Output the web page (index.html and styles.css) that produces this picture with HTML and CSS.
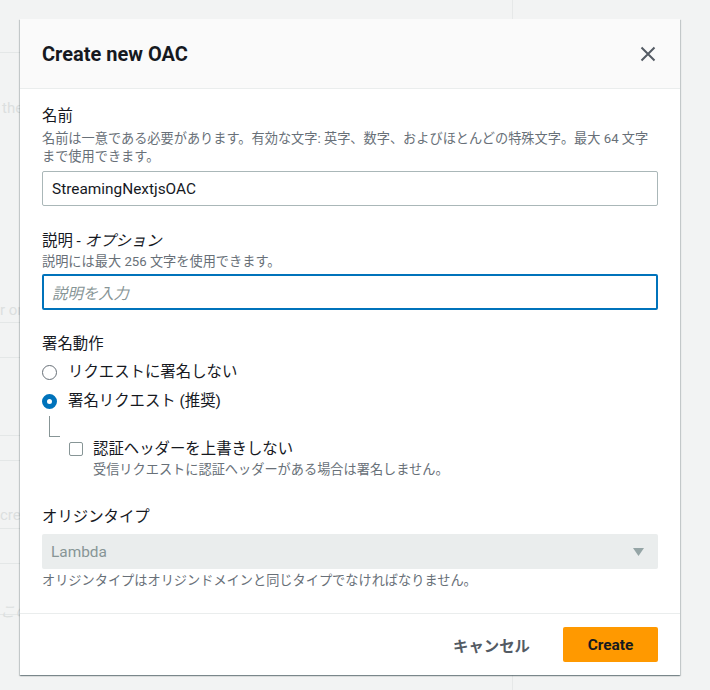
FILE: index.html
```html
<!DOCTYPE html>
<html lang="ja">
<head>
<meta charset="utf-8">
<title>Create new OAC</title>
<link rel="stylesheet" href="styles.css">
</head>
<body>
<div class="page">
  <div class="bg-panel">
    <div class="bg-row r1"></div>
    <div class="bg-row r2">
      <div class="bg-text t1">the</div>
      <div class="bg-text t2">r on</div>
    </div>
    <div class="bg-row r3"></div>
    <div class="bg-row r4"></div>
    <div class="bg-row r5"></div>
    <div class="bg-row r6"><div class="bg-text t3">crea</div></div>
    <div class="bg-row r7"></div>
    <div class="bg-row r8"><div class="bg-text t4">この</div></div>
  </div>
</div>

<div class="modal" role="dialog">
  <div class="modal-header">
    <h2 class="modal-title">Create new OAC</h2>
    <button class="close-btn" aria-label="close">
      <svg width="16" height="16" viewBox="0 0 16 16"><path d="M1.5 1.5 L14.5 14.5 M14.5 1.5 L1.5 14.5" stroke="#545b64" stroke-width="2" fill="none"/></svg>
    </button>
  </div>

  <div class="modal-body">
    <div class="field">
      <div class="label">名前</div>
      <div class="desc">名前は一意である必要があります。有効な文字: 英字、数字、およびほとんどの特殊文字。最大 64 文字まで使用できます。</div>
      <div class="input">StreamingNextjsOAC</div>
    </div>

    <div class="field f2">
      <div class="label">説明 - <i>オプション</i></div>
      <div class="desc">説明には最大 256 文字を使用できます。</div>
      <div class="input focused"><span class="placeholder">説明を入力</span></div>
    </div>

    <div class="field f3">
      <div class="label">署名動作</div>
      <div class="radio-row first"><span class="radio"></span><span>リクエストに署名しない</span></div>
      <div class="radio-row"><span class="radio checked"></span><span>署名リクエスト (推奨)</span></div>
      <div class="connector"></div>
      <div class="nested">
        <div class="check-row"><span class="checkbox"></span><span>認証ヘッダーを上書きしない</span></div>
        <div class="desc nested-desc">受信リクエストに認証ヘッダーがある場合は署名しません。</div>
      </div>
    </div>

    <div class="field f4">
      <div class="label">オリジンタイプ</div>
      <div class="select">
        <span>Lambda</span>
        <svg width="11" height="8" viewBox="0 0 11 8"><path d="M0 0 H11 L5.5 8 Z" fill="#95a5a6"/></svg>
      </div>
      <div class="desc select-desc">オリジンタイプはオリジンドメインと同じタイプでなければなりません。</div>
    </div>
  </div>

  <div class="modal-footer">
    <button class="btn-link">キャンセル</button>
    <button class="btn-primary">Create</button>
  </div>
</div>
</body>
</html>
```

FILE: styles.css
```css
* { box-sizing: border-box; }

html, body {
  margin: 0;
  padding: 0;
}

body {
  width: 710px;
  height: 690px;
  overflow: hidden;
  background: #f2f3f3;
  font-family: Roboto, "Noto Sans CJK JP", sans-serif;
  color: #16191f;
  position: relative;
}

/* background page (behind the dialog) */
.page {
  display: flex;
  height: 690px;
}

.bg-panel {
  width: 513px;
  height: 690px;
  border-right: 1px solid #e6e8e8;
}

.bg-row {
  border-bottom: 1px solid #e4e7e7;
}

.r1 { height: 53px; }
.r2 { height: 270px; }
.r3 { height: 35px; }
.r4 { height: 78px; }
.r5 { height: 25px; }
.r6 { height: 68px; }
.r7 { height: 35px; }
.r8 { height: 51px; }

.bg-text {
  font-size: 15px;
  line-height: 20px;
  color: #dcdfdf;
  white-space: nowrap;
}

.t1 { padding-top: 45px; padding-left: 2px; }
.t2 { margin-top: 182px; }
.t3 { padding-top: 44px; }
.t4 { padding-top: 38px; font-style: italic; }

/* dialog */
.modal {
  position: absolute;
  left: 20px;
  top: 19px;
  width: 660px;
  background: #ffffff;
  box-shadow: 0 1px 1px 0 rgba(0, 28, 36, 0.3), 1px 1px 1px 0 rgba(0, 28, 36, 0.15), -1px 1px 1px 0 rgba(0, 28, 36, 0.15);
}

.modal-header {
  height: 70px;
  background: #fafafa;
  border-bottom: 1px solid #eaeded;
  display: flex;
  align-items: center;
  justify-content: space-between;
  padding: 0 24px 0 22px;
}

.modal-title {
  margin: 0;
  font-size: 20px;
  font-weight: 700;
  line-height: 26px;
  color: #16191f;
}

.close-btn {
  border: 0;
  background: transparent;
  padding: 0;
  width: 16px;
  height: 16px;
  display: flex;
}

.modal-body {
  padding: 15px 22px 23px 22px;
}

.label {
  font-size: 15.4px;
  line-height: 24px;
  color: #16191f;
}

.label i {
  font-style: italic;
}

.desc {
  font-size: 13.2px;
  line-height: 18px;
  color: #687078;
  margin-top: 2px;
}

.input {
  margin-top: 5px;
  height: 35px;
  border: 1px solid #aab7b8;
  border-radius: 2px;
  padding: 0 9px;
  display: flex;
  align-items: center;
  font-size: 15.4px;
  color: #16191f;
}

.input.focused {
  border: 2px solid #0073bb;
  padding: 0 8px;
  height: 36px;
}

.placeholder {
  font-style: italic;
  color: #879596;
}

.f2 { margin-top: 23px; }
.f2 .desc { margin-top: 0; }
.f2 .input { margin-top: 3px; }

.f3 { margin-top: 22px; }

.radio-row,
.check-row {
  display: flex;
  align-items: center;
  gap: 11px;
  font-size: 15.4px;
  line-height: 24px;
  color: #16191f;
}

.radio-row.first { margin-top: 4px; }
.radio-row + .radio-row { margin-top: 5px; }

.radio {
  width: 15px;
  height: 15px;
  border-radius: 50%;
  border: 1.5px solid #687078;
  flex: none;
}

.radio.checked {
  border: 5px solid #0073bb;
}

.connector {
  margin-top: 3px;
  margin-left: 7px;
  width: 11px;
  height: 21px;
  border-left: 1px solid #879596;
  border-bottom: 1px solid #879596;
}

.nested {
  margin-left: 27px;
}

.check-row {
  gap: 10px;
}

.checkbox {
  width: 14px;
  height: 14px;
  border: 1.5px solid #879596;
  border-radius: 2px;
  flex: none;
}

.nested-desc {
  margin-top: 0;
  margin-left: 24px;
}

.f4 { margin-top: 26px; }

.select {
  margin-top: 5px;
  height: 35px;
  background: #eaeded;
  border-radius: 2px;
  display: flex;
  align-items: center;
  justify-content: space-between;
  padding: 0 14px 0 9px;
  font-size: 15.4px;
  color: #879596;
}

.select-desc { margin-top: 3px; }

.modal-footer {
  border-top: 1px solid #eaeded;
  padding: 13px 22px 13px 22px;
  display: flex;
  justify-content: flex-end;
  align-items: center;
  gap: 13px;
}

.btn-link {
  border: 0;
  background: transparent;
  height: 35px;
  padding: 0 20px;
  font-family: Roboto, "Noto Sans CJK JP", sans-serif;
  font-size: 15.4px;
  font-weight: 700;
  color: #545b64;
}

.btn-primary {
  border: 0;
  border-radius: 2px;
  background: #ff9900;
  height: 35px;
  width: 95px;
  padding: 0;
  font-family: Roboto, "Noto Sans CJK JP", sans-serif;
  font-size: 15.4px;
  font-weight: 700;
  color: #16191f;
}
```
